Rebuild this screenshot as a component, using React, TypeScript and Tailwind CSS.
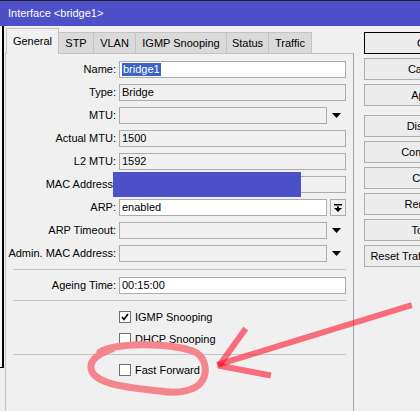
import React from 'react';

type Row = {
  label: string;
  value?: string;
  kind: 'name' | 'ro' | 'dropdown' | 'mac' | 'arp' | 'white';
};

const rows: Row[] = [
  { label: 'Name:', value: 'bridge1', kind: 'name' },
  { label: 'Type:', value: 'Bridge', kind: 'ro' },
  { label: 'MTU:', kind: 'dropdown' },
  { label: 'Actual MTU:', value: '1500', kind: 'ro' },
  { label: 'L2 MTU:', value: '1592', kind: 'ro' },
  { label: 'MAC Address:', kind: 'mac' },
  { label: 'ARP:', value: 'enabled', kind: 'arp' },
  { label: 'ARP Timeout:', kind: 'dropdown' },
  { label: 'Admin. MAC Address:', kind: 'dropdown' },
];

const tabs = [
  { name: 'STP', w: 'w-[35px]' },
  { name: 'VLAN', w: 'w-[42px]' },
  { name: 'IGMP Snooping', w: 'w-[91px]' },
  { name: 'Status', w: 'w-[42px]' },
  { name: 'Traffic', w: 'w-[43px]' },
];

const buttons = ['Disable', 'Comment', 'Copy', 'Remove', 'Torch', 'Reset Traffic Counters'];

function DownTriangle() {
  return (
    <svg width="9" height="5" viewBox="0 0 9 5">
      <polygon points="0,0 9,0 4.5,5" fill="#000" />
    </svg>
  );
}

function Field({ row }: { row: Row }) {
  const white = row.kind === 'name' || row.kind === 'arp' || row.kind === 'white';
  const narrow = row.kind === 'dropdown' || row.kind === 'arp';
  return (
    <div className="flex items-center">
      <div
        className={`h-[17px] border border-[#acacac] flex items-center pl-[2px] ${narrow ? 'w-[208px]' : 'w-[227px]'} ${white ? 'bg-white' : 'bg-[#f0f0f0]'}`}
      >
        {row.kind === 'name' ? (
          <span className="bg-[#3b63c6] text-white leading-[13px] px-px">{row.value}</span>
        ) : (
          <span>{row.value}</span>
        )}
      </div>
      {row.kind === 'dropdown' && (
        <div className="w-[19px] flex justify-center">
          <DownTriangle />
        </div>
      )}
      {row.kind === 'arp' && (
        <div className="ml-[3px] w-[16px] h-[17px] border border-[#acacac] bg-[#f0f0f0] flex items-center justify-center">
          <svg width="10" height="10" viewBox="0 0 10 10">
            <rect x="1" y="1" width="8" height="1.5" fill="#000" />
            <rect x="4" y="3.5" width="2" height="2" fill="#000" />
            <polygon points="1,5 9,5 5,9" fill="#000" />
          </svg>
        </div>
      )}
    </div>
  );
}

function FormRow({ row }: { row: Row }) {
  return (
    <div className="relative flex items-center h-[17px]">
      <div className="w-[110px] shrink-0 text-right whitespace-nowrap">{row.label}</div>
      <div className="ml-[3px]">
        <Field row={row} />
      </div>
      {row.kind === 'mac' && (
        <div className="absolute left-[107px] top-[-4px] w-[188px] h-[25px] bg-[#4c50c9]" />
      )}
    </div>
  );
}

function Check({ label, checked }: { label: string; checked?: boolean }) {
  return (
    <div className="flex items-center h-[12px]">
      <div className="w-[113px] shrink-0" />
      <div className="w-[12px] h-[12px] border border-[#6f6f6f] bg-white flex items-center justify-center">
        {checked && (
          <svg width="8" height="8" viewBox="0 0 8 8">
            <polyline points="1,4 3,6.5 7,1" fill="none" stroke="#000" strokeWidth="1.6" />
          </svg>
        )}
      </div>
      <span className="ml-[4px] whitespace-nowrap">{label}</span>
    </div>
  );
}

function Btn({ label, def, className = '' }: { label: string; def?: boolean; className?: string }) {
  return (
    <div
      className={`w-[122px] h-[22px] shrink-0 flex items-center justify-center whitespace-nowrap bg-[#ececec] border ${def ? 'border-black' : 'border-[#adadad]'} ${className}`}
    >
      {label}
    </div>
  );
}

export default function App() {
  return (
    <div className="relative w-[420px] h-[411px] overflow-hidden bg-[#f0f0f0] text-[11px] text-black font-['Liberation_Sans',Arial,sans-serif]">
      {/* Title bar */}
      <div className="h-[26px] bg-[#4c50c9] border-t border-[#1e1e1e] flex items-center pl-[8px] text-white">
        Interface &lt;bridge1&gt;
      </div>

      <div className="flex">
        {/* window edge */}
        <div className="w-[4px] shrink-0 flex flex-col">
          <div className="h-[341px] w-[4px] border-r-2 border-black bg-[#f7f7f7]" />
          <div className="h-px w-[4px] bg-black" />
        </div>

        {/* tabs + panel */}
        <div className="w-[350px] shrink-0 pl-[1px] flex flex-col">
          <div className="h-[27px] flex items-end pl-[1px]">
            <div className="relative z-10 -mb-px w-[53px] h-[26px] bg-[#f0f0f0] border-l border-t border-r border-[#c3c3c3] flex items-center justify-center pb-px">
              General
            </div>
            {tabs.map((t) => (
              <div
                key={t.name}
                className={`${t.w} h-[21px] bg-[#dadada] border-t border-r border-[#c3c3c3] flex items-center justify-center whitespace-nowrap`}
              >
                {t.name}
              </div>
            ))}
          </div>

          <div className="h-[358px] w-[349px] border-t border-l border-r border-t-[#c3c3c3] border-l-[#c3c3c3] border-r-[#a3a3a3] pt-[7px] flex flex-col">
            <div className="flex flex-col gap-[6px]">
              {rows.map((r) => (
                <FormRow key={r.label} row={r} />
              ))}
            </div>
            <div className="mt-[7px] ml-[7px] w-[333px] h-px bg-[#c4c4c4]" />
            <div className="mt-[7px]">
              <FormRow row={{ label: 'Ageing Time:', value: '00:15:00', kind: 'white' }} />
            </div>
            <div className="mt-[6px] ml-[7px] w-[333px] h-px bg-[#c4c4c4]" />
            <div className="mt-[10px] flex flex-col gap-[10px]">
              <Check label="IGMP Snooping" checked />
              <Check label="DHCP Snooping" />
            </div>
            <div className="mt-[9px] ml-[7px] w-[333px] h-px bg-[#c4c4c4]" />
            <div className="mt-[9px]">
              <Check label="Fast Forward" />
            </div>
          </div>
        </div>

        {/* buttons */}
        <div className="ml-[10px] pt-[6px] flex flex-col">
          <div className="flex flex-col gap-[4px]">
            <Btn label="OK" def />
            <Btn label="Cancel" />
            <Btn label="Apply" />
          </div>
          <div className="mt-[9px] flex flex-col gap-[4px]">
            {buttons.map((b) => (
              <Btn key={b} label={b} />
            ))}
          </div>
        </div>
      </div>

      {/* pen annotations drawn over the screenshot */}
      <svg className="absolute inset-0 pointer-events-none" width="420" height="411" viewBox="0 0 420 411">
        <path
          d="M100 352 C115 343 165 342 193 351 C206 356 208 372 202 381 C196 391 178 394 160 391 C135 388 100 386 92 372 C88 362 95 355 112 349"
          fill="none"
          stroke="#f4858d"
          strokeWidth="7"
          strokeLinecap="round"
        />
        <g stroke="rgba(255,20,45,0.6)" strokeWidth="6" strokeLinecap="square" fill="none">
          <line x1="409" y1="306" x2="220" y2="364" />
          <line x1="221" y1="363" x2="244" y2="331" />
          <line x1="221" y1="366" x2="268" y2="375" />
        </g>
      </svg>
    </div>
  );
}
